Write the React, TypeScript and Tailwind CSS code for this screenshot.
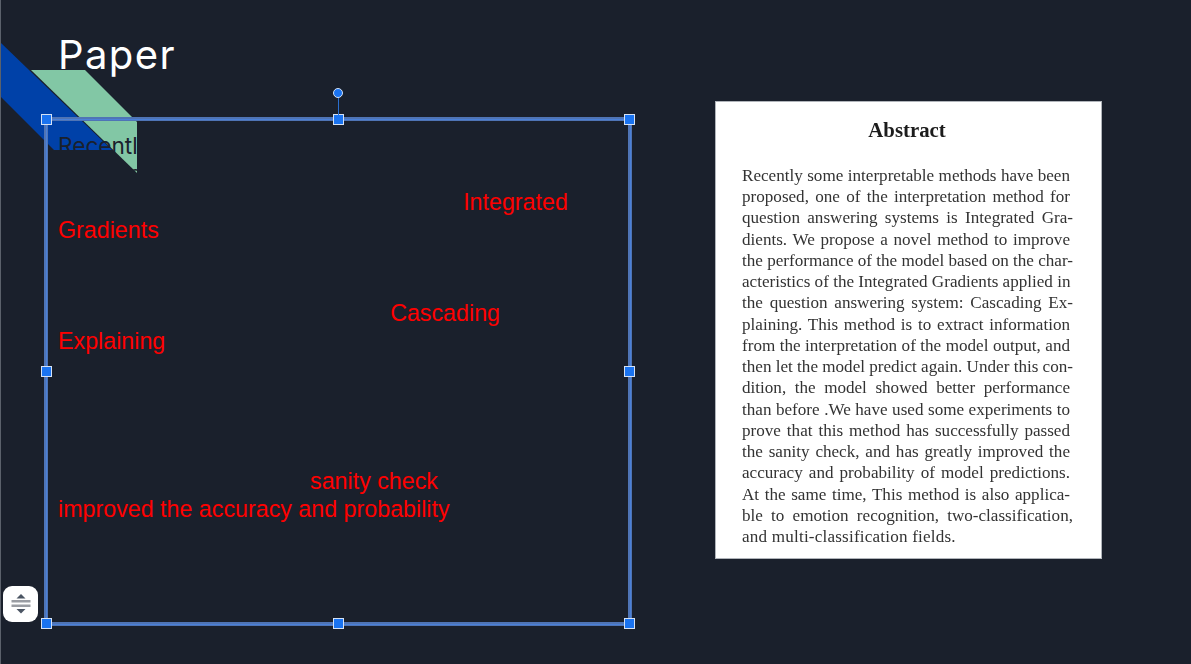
const abstractLines = [
  'Recently some interpretable methods have been',
  'proposed, one of the interpretation method for',
  'question answering systems is Integrated Gra-',
  'dients. We propose a novel method to improve',
  'the performance of the model based on the char-',
  'acteristics of the Integrated Gradients applied in',
  'the question answering system: Cascading Ex-',
  'plaining. This method is to extract information',
  'from the interpretation of the model output, and',
  'then let the model predict again. Under this con-',
  'dition, the model showed better performance',
  'than before .We have used some experiments to',
  'prove that this method has successfully passed',
  'the sanity check, and has greatly improved the',
  'accuracy and probability of model predictions.',
  'At the same time, This method is also applica-',
  'ble to emotion recognition, two-classification,',
];

const Mark = ({ children }: { children: string }) => <span className="text-[#ff0000]">{children}</span>;

const Handle = ({ className = '' }: { className?: string }) => (
  <span className={`w-[11px] h-[11px] bg-[#1a73f0] border border-[#d5e2f5] ${className}`} />
);

const Ribbons = () => (
  <svg className="absolute left-0 top-0" width="140" height="180" viewBox="0 0 140 180">
    <polygon points="0,43 111,150 53,150 0,97" fill="#0041a8" />
    <polygon points="30,70 84,70 136,122 136,173" fill="#82c7a5" />
  </svg>
);

const App = () => {
  return (
    <div className="relative flex w-[1191px] h-[664px] overflow-hidden bg-[#1a202c] border-l border-[#5b616b]">
      <Ribbons />

      <div className="relative w-[714px] shrink-0 pl-[43px]">
        <h1 className="pl-[14px] pt-[31px] h-[117px] text-[40px] leading-[48px] tracking-[1.4px] font-normal text-white font-['Inter',sans-serif]">
          Paper
        </h1>

        <div className="relative w-[588px] h-[509px] border-4 border-[#4f74b5] pl-[11px] pt-[11px]">
          <p className="-ml-px text-[23.25px] leading-[27.9px] whitespace-nowrap text-[#1a202c] font-['Liberation_Sans',sans-serif]">
            <span className="font-['Inter',sans-serif] text-[22.6px]">Recently</span> some interpretable methods have been
            <br />
            proposed, one of the interpretation method
            <br />
            for the question answering systems is <span className="ml-[11px]"><Mark>Integrated</Mark></span>
            <br />
            <Mark>Gradients</Mark>. We propose a novel method to improve
            <br />
            the performance of the model based on the
            <br />
            characteristics of the Integrated Gradients applied in
            <br />
            the question answering system: <Mark>Cascading</Mark>
            <br />
            <Mark>Explaining</Mark>. This method is to extract information
            <br />
            from the interpretation of the model output, and
            <br />
            then let the model predict again. Under this
            <br />
            condition, the model showed better performance
            <br />
            than before .We have used some experiments to
            <br />
            successfully passed the <Mark>sanity check</Mark>
            <br />
            <Mark>improved the accuracy and probability</Mark> of model
          </p>

          <span className="absolute -inset-[2.5px] border border-[#4a80d8]" />

          <div className="absolute -inset-[7px] grid grid-cols-3 grid-rows-3 items-center justify-items-center">
            <Handle className="justify-self-start self-start" />
            <Handle className="self-start" />
            <Handle className="justify-self-end self-start" />
            <Handle className="justify-self-start" />
            <span />
            <Handle className="justify-self-end" />
            <Handle className="justify-self-start self-end" />
            <Handle className="self-end" />
            <Handle className="justify-self-end self-end" />
          </div>

          <div className="absolute bottom-full left-1/2 -translate-x-1/2 mb-[6px] flex flex-col items-center">
            <span className="w-[10px] h-[10px] rounded-full bg-[#1a73f0] border border-[#d5e2f5]" />
            <span className="w-px h-[17px] bg-[#2a6fd0]" />
          </div>
        </div>

        <button className="absolute left-[2px] bottom-[42px] flex items-center justify-center w-[35px] h-[36px] rounded-[9px] bg-white">
          <svg width="20" height="22" viewBox="0 0 20 22">
            <polygon points="10,1 14.5,5.5 5.5,5.5" fill="#4b5563" />
            <rect x="0.5" y="7" width="19" height="2.5" fill="#9a9da3" />
            <rect x="0.5" y="11.5" width="19" height="2.5" fill="#9a9da3" />
            <polygon points="5.5,16 14.5,16 10,20.5" fill="#4b5563" />
          </svg>
        </button>
      </div>

      <div className="pt-[101px]">
        <div className="w-[387px] h-[458px] bg-white border border-[#b0b4ba] pt-[16px] pl-[26px] font-['Liberation_Serif',serif] text-[#333333] blur-[0.4px]">
          <h2 className="w-[330px] text-center text-[20.8px] leading-[24px] font-bold text-[#1c1c1c]">Abstract</h2>
          <div className="mt-[23px] text-[17.1px] leading-[21.24px] whitespace-nowrap">
            {abstractLines.map((line) => (
              <div
                key={line}
                className={`[text-align-last:justify] ${/[-,.]$/.test(line) && line.length !== 46 ? 'w-[331px]' : 'w-[328px]'}`}
              >
                {line}
              </div>
            ))}
            <div className="tracking-[0.2px]">and multi-classification fields.</div>
          </div>
        </div>
      </div>
    </div>
  );
};

export default App;
